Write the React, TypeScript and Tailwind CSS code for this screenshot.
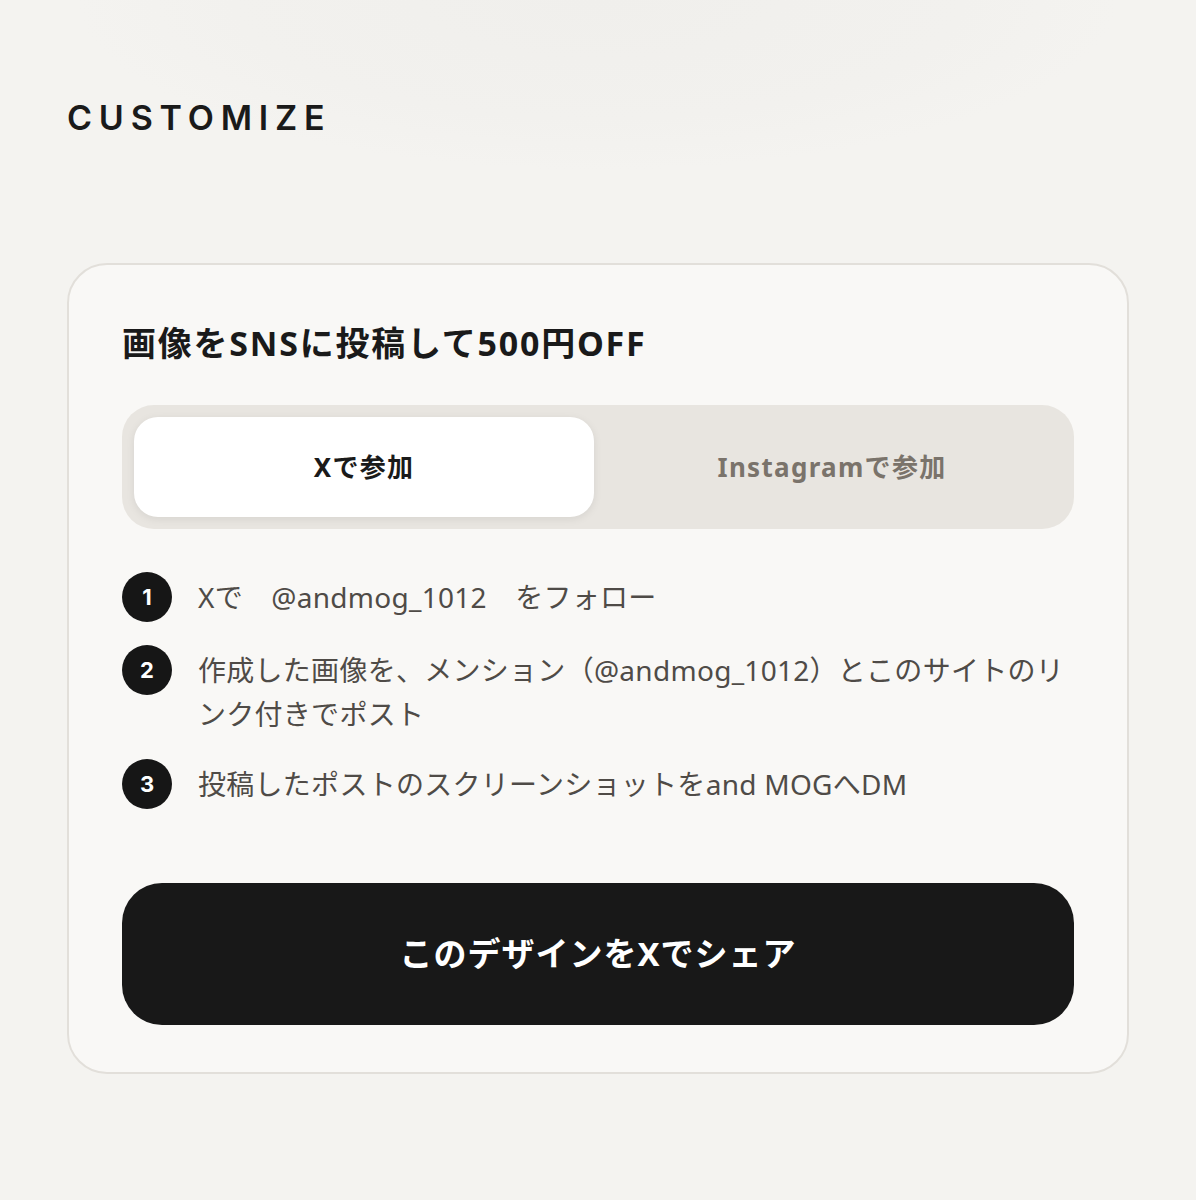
import React, { useState } from "react";

const steps = [
  <>Xで　@andmog_1012　をフォロー</>,
  <>作成した画像を、メンション（@andmog_1012）とこのサイトのリンク付きでポスト</>,
  <>投稿したポストのスクリーンショットをand MOGへDM</>,
];

export default function App() {
  const [tab, setTab] = useState<"x" | "ig">("x");

  return (
    <div
      className="min-h-[1200px] w-full bg-[#f4f3f0] bg-[radial-gradient(ellipse_520px_170px_at_50%_0%,#f0efec_0%,#f2f1ee_70%,#f4f3f0_100%)] px-[67px] pt-[100px] pb-[128px] text-[#1a1a1a]"
      style={{ fontFamily: '"Noto Sans", "Noto Sans CJK JP", sans-serif' }}
    >
      <h2
        className="text-[34px] leading-[36px] font-semibold tracking-[0.2em]"
        style={{ fontFamily: '"Inter", sans-serif' }}
      >
        CUSTOMIZE
      </h2>

      <section className="mt-[127px] rounded-[40px] border-2 border-[#e2dfda] bg-[#f9f8f6] px-[53px] pt-[57px] pb-[47px]">
        <h3 className="text-[34px] leading-[42px] font-bold tracking-[0.052em]">画像をSNSに投稿して500円OFF</h3>

        <div className="mt-[41px] grid grid-cols-2 gap-[8px] rounded-[32px] bg-[#e8e5e0] p-[12px]">
          <button
            onClick={() => setTab("x")}
            className={`h-[100px] rounded-[24px] text-[26px] font-bold tracking-[0.05em] ${
              tab === "x" ? "bg-white text-[#1a1a1a] shadow-[0_2px_8px_rgba(0,0,0,0.08)]" : "text-[#7a736b]"
            }`}
          >
            Xで参加
          </button>
          <button
            onClick={() => setTab("ig")}
            className={`h-[100px] rounded-[24px] text-[26px] font-bold tracking-[0.05em] ${
              tab === "ig" ? "bg-white text-[#1a1a1a] shadow-[0_2px_8px_rgba(0,0,0,0.08)]" : "text-[#7a736b]"
            }`}
          >
            Instagramで参加
          </button>
        </div>

        <ol className="mt-[46px] flex flex-col gap-[26px]">
          {steps.map((s, i) => (
            <li key={i} className="flex items-start gap-[26px]">
              <span
                className="mt-[-3px] flex h-[50px] w-[50px] shrink-0 items-center justify-center rounded-full bg-[#161616] text-[22px] font-bold text-white"
                style={{ fontFamily: '"Inter", sans-serif' }}
              >
                {i + 1}
              </span>
              <p className="text-[28px] leading-[44px] tracking-[0.01em] text-[#4f4b47]">{s}</p>
            </li>
          ))}
        </ol>

        <button className="mt-[74px] flex h-[142px] w-full items-center justify-center rounded-[40px] bg-[#181818] text-[33px] font-bold tracking-[0.03em] text-white">
          このデザインをXでシェア
        </button>
      </section>
    </div>
  );
}
